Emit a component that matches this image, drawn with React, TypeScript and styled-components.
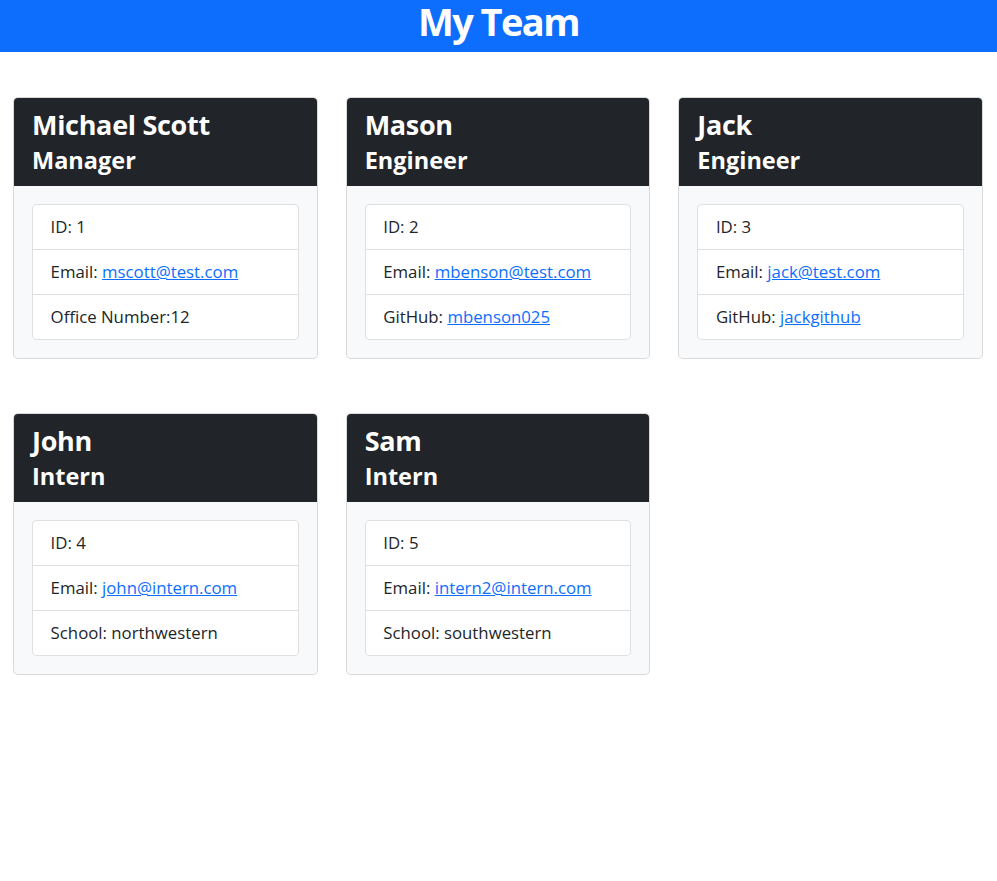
import React from "react";
import styled, { createGlobalStyle } from "styled-components";

type Member = {
  name: string;
  role: string;
  id: number;
  email: string;
  extraLabel: string;
  extraValue: string;
  extraLink?: boolean;
};

const team: Member[] = [
  { name: "Michael Scott", role: "Manager", id: 1, email: "mscott@test.com", extraLabel: "Office Number:", extraValue: "12" },
  { name: "Mason", role: "Engineer", id: 2, email: "mbenson@test.com", extraLabel: "GitHub: ", extraValue: "mbenson025", extraLink: true },
  { name: "Jack", role: "Engineer", id: 3, email: "jack@test.com", extraLabel: "GitHub: ", extraValue: "jackgithub", extraLink: true },
  { name: "John", role: "Intern", id: 4, email: "john@intern.com", extraLabel: "School: ", extraValue: "northwestern" },
  { name: "Sam", role: "Intern", id: 5, email: "intern2@intern.com", extraLabel: "School: ", extraValue: "southwestern" },
];

export default function App() {
  return (
    <>
      <GlobalStyle />
      <Banner>
        <Title>My Team</Title>
      </Banner>
      <Grid>
        {team.map((m) => (
          <Card key={m.id}>
            <CardHeader>
              <Name>{m.name}</Name>
              <Role>{m.role}</Role>
            </CardHeader>
            <CardBody>
              <List>
                <Item>ID: {m.id}</Item>
                <Item>
                  Email: <Link href={`mailto:${m.email}`}>{m.email}</Link>
                </Item>
                <Item>
                  {m.extraLabel}
                  {m.extraLink ? (
                    <Link href={`https://github.com/${m.extraValue}`}>{m.extraValue}</Link>
                  ) : (
                    m.extraValue
                  )}
                </Item>
              </List>
            </CardBody>
          </Card>
        ))}
      </Grid>
    </>
  );
}

/** Styled Component */
const GlobalStyle = createGlobalStyle`
  body {
    margin: 0;
    background: #fff;
    color: #212529;
    font-family: "Open Sans", "Noto Sans", sans-serif;
    font-size: 16.8px;
    line-height: 1.5;
  }
`;

const Banner = styled.header`
  height: 52px;
  box-sizing: border-box;
  padding-top: 2px;
  background-color: #0d6efd;
  display: flex;
  justify-content: center;
`;

const Title = styled.h1`
  margin: 0;
  color: #fff;
  font-size: 38px;
  font-weight: 700;
  letter-spacing: -1.6px;
  line-height: 38px;
`;

const Grid = styled.main`
  display: grid;
  grid-template-columns: repeat(3, 1fr);
  column-gap: 28px;
  row-gap: 54px;
  padding: 45px 14px 0 13px;
`;

const Card = styled.section`
  border: 1px solid rgba(0, 0, 0, 0.125);
  border-radius: 5px;
  background-color: #f8f9fa;
  overflow: hidden;
`;

const CardHeader = styled.div`
  background-color: #212529;
  color: #fff;
  height: 88px;
  box-sizing: border-box;
  padding: 9px 18px;
`;

const Name = styled.h3`
  margin: 0;
  font-size: 27px;
  font-weight: 700;
  letter-spacing: -0.3px;
  line-height: 36px;
`;

const Role = styled.h4`
  margin: 0;
  font-size: 23.5px;
  font-weight: 700;
  line-height: 34px;
`;

const CardBody = styled.div`
  padding: 18px;
`;

const List = styled.ul`
  list-style: none;
  margin: 0;
  padding: 0;
  background: #fff;
  border: 1px solid rgba(0, 0, 0, 0.125);
  border-radius: 5px;
`;

const Item = styled.li`
  padding: 9px 17.6px;
  line-height: 26px;
  & + & {
    border-top: 1px solid rgba(0, 0, 0, 0.125);
  }
`;

const Link = styled.a`
  color: #0d6efd;
  text-decoration: underline;
`;
